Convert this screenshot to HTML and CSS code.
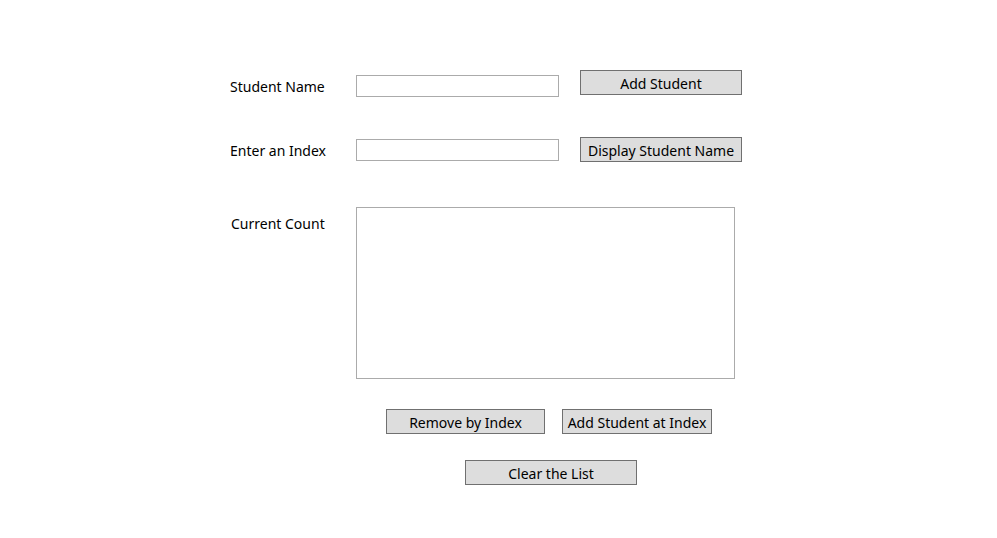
FILE: index.html
```html
<!DOCTYPE html>
<html>
<head>
<meta charset="utf-8">
<link rel="stylesheet" href="styles.css">
</head>
<body>
<main class="form">
  <div class="row row-name">
    <label class="label">Student Name</label>
    <input class="textbox" type="text">
    <button class="btn btn-add">Add Student</button>
  </div>
  <div class="row row-index">
    <label class="label">Enter an Index</label>
    <input class="textbox" type="text">
    <button class="btn btn-display">Display Student Name</button>
  </div>
  <div class="row row-list">
    <label class="label">Current Count</label>
    <div class="listbox"></div>
  </div>
  <div class="row row-actions">
    <button class="btn btn-remove">Remove by Index</button>
    <button class="btn btn-insert">Add Student at Index</button>
  </div>
  <div class="row row-clear">
    <button class="btn btn-clear">Clear the List</button>
  </div>
</main>
</body>
</html>
```
FILE: styles.css
```css
* { box-sizing: border-box; }
html, body {
  margin: 0;
  padding: 0;
  background: #ffffff;
  width: 997px;
  height: 538px;
  overflow: hidden;
}
body {
  font-family: "Noto Sans", "Open Sans", sans-serif;
  font-size: 14px;
  color: #000000;
}
.form {
  display: flex;
  flex-direction: column;
  padding-left: 230px;
  padding-top: 70px;
}
.row {
  display: flex;
  align-items: flex-start;
}
.label {
  width: 126px;
  line-height: 20px;
  white-space: nowrap;
}
.textbox {
  width: 203px;
  height: 22px;
  border: 1px solid #ababab;
  background: #fff;
  margin: 0;
  padding: 0 3px;
  font: inherit;
  outline: none;
}
.btn {
  height: 25px;
  border: 1px solid #707070;
  background: #dddddd;
  color: #000;
  font: inherit;
  line-height: 21px;
  padding: 1px 0 0;
  margin: 0;
  border-radius: 0;
}
.row-name .label { margin-top: 7px; }
.row-name .textbox { margin-top: 5px; }
.btn-add { width: 162px; margin-left: 21px; }

.row-index { margin-top: 40px; }
.row-index .label { margin-top: 4px; }
.row-index .textbox { margin-top: 2px; }
.btn-display { width: 162px; margin-left: 21px; }

.row-list { margin-top: 45px; }
.row-list .label { margin-top: 7px; padding-left: 1px; }
.listbox {
  width: 379px;
  height: 172px;
  border: 1px solid #ababab;
  background: #fff;
}

.row-actions { margin-top: 30px; padding-left: 156px; }
.btn-remove { width: 159px; }
.btn-insert { width: 150px; margin-left: 17px; }

.row-clear { margin-top: 26px; padding-left: 235px; }
.btn-clear { width: 172px; }
```
